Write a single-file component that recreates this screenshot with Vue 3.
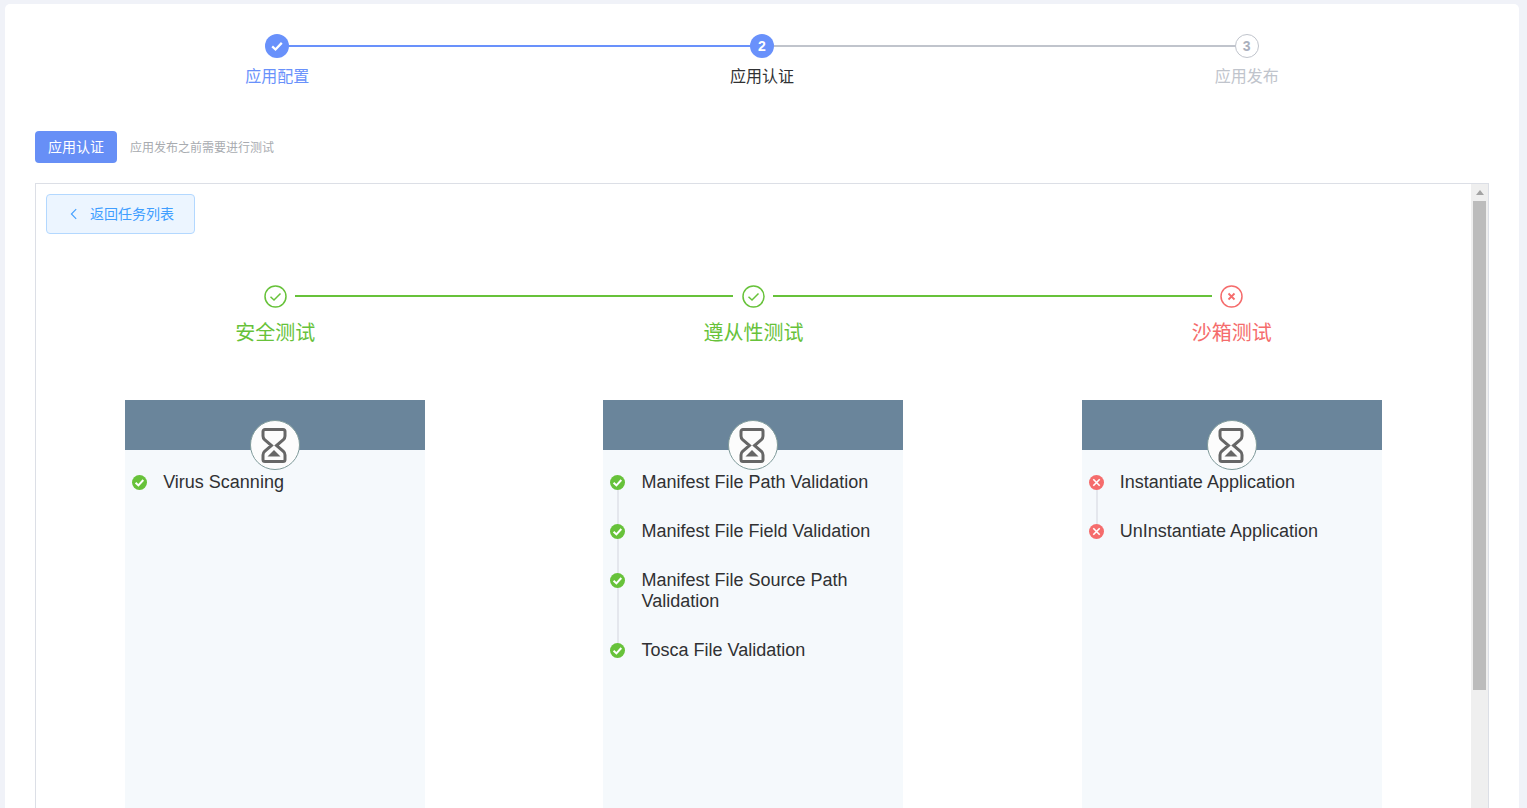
<script setup>
const topSteps = [
  { label: '应用配置', state: 'done' },
  { label: '应用认证', state: 'active', n: 2 },
  { label: '应用发布', state: 'wait', n: 3 },
]
const columns = [
  { title: '安全测试', status: 'ok', items: [{ t: 'Virus Scanning', s: 'ok' }] },
  {
    title: '遵从性测试',
    status: 'ok',
    items: [
      { t: 'Manifest File Path Validation', s: 'ok' },
      { t: 'Manifest File Field Validation', s: 'ok' },
      { t: 'Manifest File Source Path Validation', s: 'ok' },
      { t: 'Tosca File Validation', s: 'ok' },
    ],
  },
  {
    title: '沙箱测试',
    status: 'fail',
    items: [
      { t: 'Instantiate Application', s: 'fail' },
      { t: 'UnInstantiate Application', s: 'fail' },
    ],
  },
]
</script>

<template>
  <div class="page">
    <main class="card">
      <ol class="steps">
        <li v-for="(s, i) in topSteps" :key="s.label" class="step" :class="s.state">
          <div class="step-head">
            <span v-if="i < 2" class="step-line" :class="{ passed: i === 0 }"></span>
            <span class="step-icon">
              <svg v-if="s.state === 'done'" width="14" height="14" viewBox="0 0 14 14">
                <path d="M2.200 7.400 5.500 10.500 11.800 3.900" fill="none" stroke="#fff" stroke-width="2.300" />
              </svg>
              <template v-else>{{ s.n }}</template>
            </span>
          </div>
          <div class="step-label">{{ s.label }}</div>
        </li>
      </ol>

      <div class="tag-row">
        <span class="tag">应用认证</span>
        <span class="hint">应用发布之前需要进行测试</span>
      </div>

      <section class="box">
        <div class="content">
          <button class="back">
            <svg width="14" height="14" viewBox="0 0 14 14">
              <path d="M9.200 2.200 4.400 7l4.800 4.800" fill="none" stroke="#409eff" stroke-width="1.100" />
            </svg>
            <span>返回任务列表</span>
          </button>

          <div class="columns">
            <div v-for="(c, i) in columns" :key="c.title" class="col" :class="c.status">
              <div class="col-head">
                <span v-if="i < 2" class="col-line"></span>
                <svg class="col-icon" width="23" height="23" viewBox="0 0 23 23">
                  <circle cx="11.500" cy="11.500" r="10.500" fill="#fff" stroke="currentColor" stroke-width="1.500" />
                  <path v-if="c.status === 'ok'" d="M6.500 11.800 10 15 16.500 8.500" fill="none" stroke="currentColor" stroke-width="1.500" />
                  <path v-else d="M8.500 8.500l6 6M14.500 8.500l-6 6" fill="none" stroke="currentColor" stroke-width="1.800" />
                </svg>
              </div>
              <div class="col-title">{{ c.title }}</div>

              <div class="panel">
                <div class="panel-head">
                  <span class="hourglass">
                    <svg width="28" height="37" viewBox="0 0 28 37">
                      <path d="M5 2.500h18a2 2 0 0 1 2 2v4.500c0 1.500-.6 2.700-1.600 3.600l-6.900 5.900 6.900 5.900c1 .9 1.600 2.100 1.600 3.600v4.500a2 2 0 0 1-2 2H5a2 2 0 0 1-2-2V28c0-1.500.6-2.700 1.600-3.600l6.900-5.900-6.900-5.900C3.600 11.700 3 10.500 3 9V4.500a2 2 0 0 1 2-2z" fill="none" stroke="#666" stroke-width="3" />
                      <path d="M14 23l6.500 6.500H7.500z" fill="#666" />
                    </svg>
                  </span>
                </div>
                <ul class="items">
                  <li v-for="it in c.items" :key="it.t" class="item">
                    <span class="dot" :class="it.s">
                      <svg width="15" height="15" viewBox="0 0 15 15">
                        <path v-if="it.s === 'ok'" d="M3.600 7.800 6.400 10.400 11.300 5" fill="none" stroke="#fff" stroke-width="2" />
                        <path v-else d="M4.300 4.300l6.400 6.400M10.700 4.300l-6.400 6.400" fill="none" stroke="#fff" stroke-width="1.600" />
                      </svg>
                    </span>
                    {{ it.t }}
                  </li>
                </ul>
              </div>
            </div>
          </div>
        </div>

        <div class="scrollbar" aria-hidden="true">
          <span class="arrow"></span>
          <span class="thumb"></span>
        </div>
      </section>
    </main>
  </div>
</template>

<style>
html, body { margin: 0; height: 100%; overflow: hidden; background: #f0f2f8; }
</style>

<style scoped>
.page {
  height: 808px;
  overflow: hidden;
  box-sizing: border-box;
  padding: 4px 8px 0 5px;
  font-family: "Liberation Sans", "Noto Sans CJK SC", sans-serif;
  color: #303133;
}
.card {
  background: #fff;
  border-radius: 5px 5px 0 0;
  padding: 30px 30px 0;
  height: 900px;
  box-sizing: border-box;
}
.steps {
  list-style: none;
  margin: 0 0 42px;
  padding: 0;
  display: grid;
  grid-template-columns: repeat(3, 1fr);
}
.step { text-align: center; }
.step-head { position: relative; height: 24px; }
.step-line {
  position: absolute;
  top: 11px;
  left: 50%;
  width: 100%;
  height: 2px;
  background: #c0c4cc;
}
.step-line.passed { background: #6991fb; }
.step-icon {
  position: relative;
  box-sizing: border-box;
  width: 24px;
  height: 24px;
  border-radius: 50%;
  display: inline-flex;
  align-items: center;
  justify-content: center;
  font-size: 14px;
  font-weight: 700;
  line-height: 1;
  color: #fff;
  background: #6991fb;
}
.wait .step-icon { background: #fff; border: 1.500px solid #c0c4cc; color: #aab0bd; }
.step-label { margin-top: 7px; font-size: 16px; line-height: 24px; }
.done .step-label { color: #6991fb; }
.active .step-label { color: #303133; }
.wait .step-label { color: #c0c4cc; }

.tag-row { display: flex; align-items: center; height: 32px; margin-bottom: 20px; }
.tag {
  width: 82px;
  height: 32px;
  border-radius: 4px;
  background: #678ff6;
  color: #fff;
  font-size: 14px;
  line-height: 32px;
  text-align: center;
}
.hint { margin-left: 13px; padding-bottom: 2px; font-size: 12px; color: #a8abb0; }

.box {
  display: flex;
  height: 700px;
  box-sizing: border-box;
  border: 1px solid #dcdfe6;
}
.content { flex: 1; min-width: 0; }
.back {
  display: flex;
  align-items: center;
  box-sizing: border-box;
  width: 149px;
  height: 40px;
  margin: 10px 0 0 10px;
  padding: 0 0 0 20px;
  border: 1px solid #b3d8ff;
  border-radius: 4px;
  background: #ecf5ff;
  color: #409eff;
  font: inherit;
  font-size: 14px;
}
.back span { margin-left: 9px; padding-bottom: 2px; }

.columns {
  display: grid;
  grid-template-columns: repeat(3, 1fr);
  margin-top: 51px;
}
.col { color: #67c23a; }
.col.fail { color: #f56c6c; }
.col-head { position: relative; height: 23px; text-align: center; }
.col-icon { display: inline-block; vertical-align: top; }
.col-line {
  position: absolute;
  top: 10px;
  left: calc(50% + 20px);
  width: calc(100% - 40px);
  height: 2px;
  background: #67c23a;
}
.col-title { margin-top: 11px; font-size: 20px; line-height: 28px; text-align: center; }

.panel { width: 300px; margin: 53px auto 0; background: #f5f9fc; min-height: 420px; }
.panel-head { position: relative; height: 50px; background: #6a859b; }
.hourglass {
  position: absolute;
  left: 125px;
  top: 20px;
  box-sizing: border-box;
  width: 50px;
  height: 50px;
  padding: 1px 2px 0 0;
  border: 1px solid #7f9a9a;
  border-radius: 50%;
  background: #fcfcfc;
  display: flex;
  align-items: center;
  justify-content: center;
}
.items {
  list-style: none;
  margin: 0;
  padding: 22px 20px 0 0;
  color: #303133;
  font-size: 18px;
  line-height: 21px;
}
.item { position: relative; padding: 0 0 28px 38px; }
.item:not(:last-child)::before {
  content: "";
  position: absolute;
  left: 14px;
  top: 11px;
  bottom: -11px;
  width: 2px;
  background: #e4e7ed;
}
.dot { position: absolute; left: 7px; top: 2.500px; width: 15px; height: 15px; border-radius: 50%; }
.dot svg { display: block; }
.dot.ok { background: #67c23a; }
.dot.fail { background: #f56c6c; }

.scrollbar { position: relative; width: 17px; flex: none; background: #efefef; }
.arrow {
  position: absolute;
  left: 4.500px;
  top: 6px;
  width: 0;
  height: 0;
  border-left: 4px solid transparent;
  border-right: 4px solid transparent;
  border-bottom: 5px solid #a3a3a3;
}
.thumb {
  position: absolute;
  left: 2px;
  top: 17px;
  width: 13px;
  height: 489px;
  background: #bcbcbc;
}
</style>
